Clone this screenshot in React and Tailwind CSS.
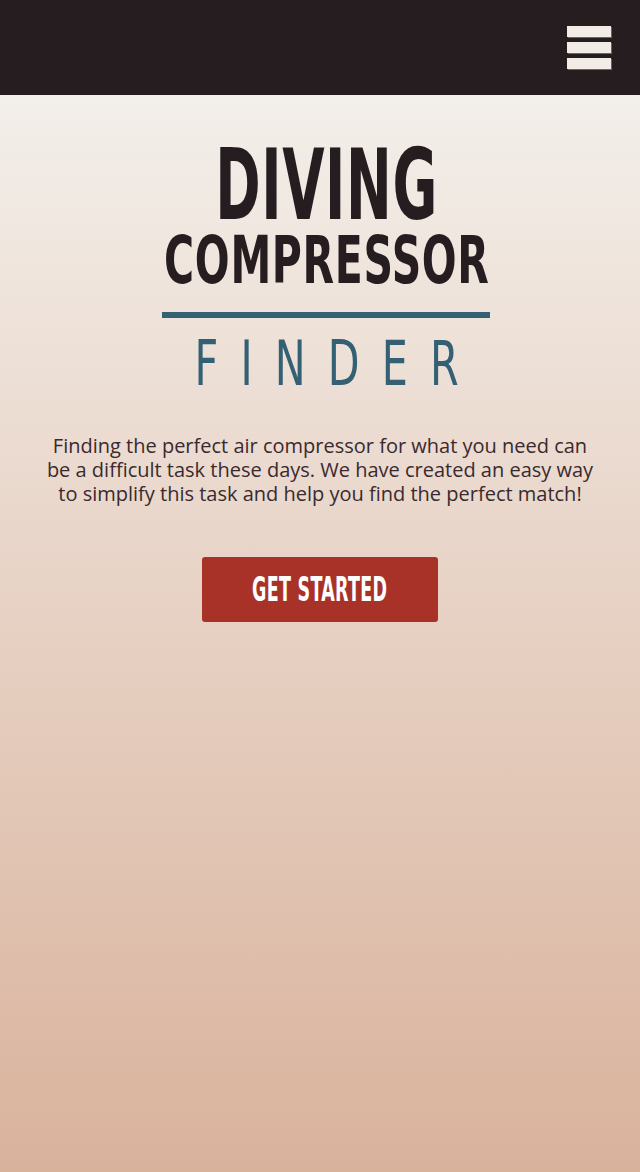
import React from "react";

const display = "font-['DejaVu_Sans_Condensed','DejaVu_Sans',sans-serif]";

function MenuButton() {
  return (
    <button className="flex flex-col gap-[5px] mr-[29px]" aria-label="Menu">
      <span className="block w-[44px] h-[11px] bg-[#f1ede6] shadow-[1px_1px_0_#6b6467]" />
      <span className="block w-[44px] h-[11px] bg-[#f1ede6] shadow-[1px_1px_0_#6b6467]" />
      <span className="block w-[44px] h-[11px] bg-[#f1ede6] shadow-[1px_1px_0_#6b6467]" />
    </button>
  );
}

export default function App() {
  return (
    <div className="min-h-[1172px] flex flex-col bg-[#f3efea]">
      <header className="h-[95px] bg-[#261d21] flex items-center justify-end">
        <MenuButton />
      </header>
      <main className="flex-1 flex flex-col items-center bg-gradient-to-b from-[#f3efea] to-[#d9b29c] pt-[50px]">
        <div className="flex flex-col items-center ml-[14px]">
          <h1 className={`${display} text-[#261d21] font-bold flex flex-col items-center whitespace-nowrap`}>
            <span className="block text-[98px] leading-[80px] scale-x-[0.62] tracking-[1px]">DIVING</span>
            <span className="block text-[66px] leading-[66px] scale-x-[0.69] tracking-[1px] mt-[3px]">COMPRESSOR</span>
          </h1>
          <div className="w-[328px] h-[6px] bg-[#336173] mt-[18px] -translate-x-[1px]" />
          <div className={`${display} text-[#336173] text-[62px] leading-[60px] tracking-[30px] pl-[30px] scale-x-[0.74] mt-[16px] whitespace-nowrap`}>
            FINDER
          </div>
        </div>
        <p className="font-['Open_Sans',sans-serif] text-[20px] leading-[24px] text-[#3a2a2e] text-center px-[40px] mt-[40px]">
          Finding the perfect air compressor for what you need can be a difficult task these days. We have created an easy way to simplify this task and help you find the perfect match!
        </p>
        <button className="mt-[51px] w-[236px] h-[65px] bg-[#a83228] rounded-[3px] flex items-center justify-center">
          <span className={`${display} font-bold text-white text-[33px] leading-[40px] scale-x-[0.59] tracking-[0.5px] whitespace-nowrap`}>GET STARTED</span>
        </button>
      </main>
    </div>
  );
}
